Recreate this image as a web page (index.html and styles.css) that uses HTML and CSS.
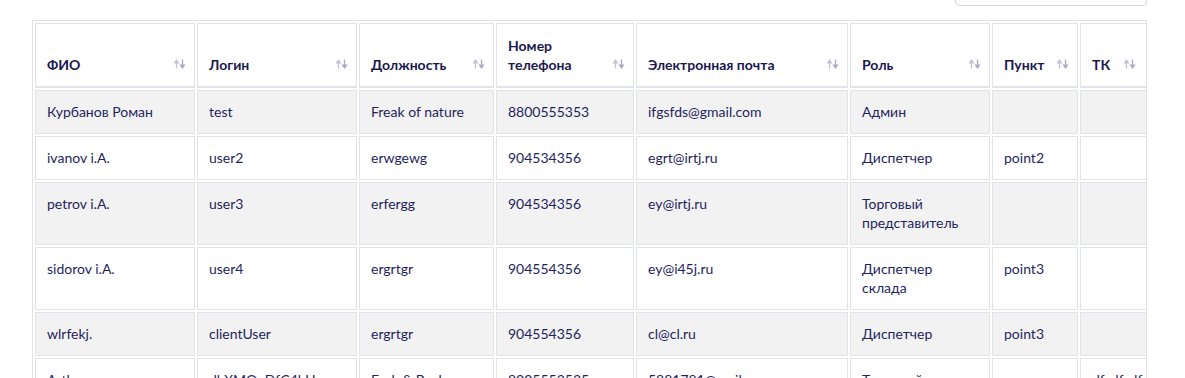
FILE: index.html
```html
<!DOCTYPE html>
<html lang="ru">
<head>
<meta charset="utf-8">
<title>Пользователи</title>
<link rel="stylesheet" href="styles.css">
</head>
<body>
<div class="page">
  <div class="toolbar">
    <input class="search" type="text" placeholder="Поиск">
  </div>
  <div class="table-wrap">
    <table class="users">
      <colgroup>
        <col class="w1"><col class="w2"><col class="w3"><col class="w4"><col class="w5"><col class="w6"><col class="w7"><col class="w8">
      </colgroup>
      <thead>
        <tr>
          <th><div class="th-in"><span>ФИО</span><svg class="sort" viewBox="0 0 12 10"><path d="M2.5 9.5V2.5M0.6 3.9L2.5 1.2L4.4 3.9Z"/><path class="dn" d="M8.5 0.5V7.5M6.6 6.1L8.5 8.8L10.4 6.1Z"/></svg></div></th>
          <th><div class="th-in"><span>Логин</span><svg class="sort" viewBox="0 0 12 10"><path d="M2.5 9.5V2.5M0.6 3.9L2.5 1.2L4.4 3.9Z"/><path class="dn" d="M8.5 0.5V7.5M6.6 6.1L8.5 8.8L10.4 6.1Z"/></svg></div></th>
          <th><div class="th-in"><span>Должность</span><svg class="sort" viewBox="0 0 12 10"><path d="M2.5 9.5V2.5M0.6 3.9L2.5 1.2L4.4 3.9Z"/><path class="dn" d="M8.5 0.5V7.5M6.6 6.1L8.5 8.8L10.4 6.1Z"/></svg></div></th>
          <th><div class="th-in"><span>Номер<br>телефона</span><svg class="sort" viewBox="0 0 12 10"><path d="M2.5 9.5V2.5M0.6 3.9L2.5 1.2L4.4 3.9Z"/><path class="dn" d="M8.5 0.5V7.5M6.6 6.1L8.5 8.8L10.4 6.1Z"/></svg></div></th>
          <th><div class="th-in"><span>Электронная почта</span><svg class="sort" viewBox="0 0 12 10"><path d="M2.5 9.5V2.5M0.6 3.9L2.5 1.2L4.4 3.9Z"/><path class="dn" d="M8.5 0.5V7.5M6.6 6.1L8.5 8.8L10.4 6.1Z"/></svg></div></th>
          <th><div class="th-in"><span>Роль</span><svg class="sort" viewBox="0 0 12 10"><path d="M2.5 9.5V2.5M0.6 3.9L2.5 1.2L4.4 3.9Z"/><path class="dn" d="M8.5 0.5V7.5M6.6 6.1L8.5 8.8L10.4 6.1Z"/></svg></div></th>
          <th><div class="th-in"><span>Пункт</span><svg class="sort" viewBox="0 0 12 10"><path d="M2.5 9.5V2.5M0.6 3.9L2.5 1.2L4.4 3.9Z"/><path class="dn" d="M8.5 0.5V7.5M6.6 6.1L8.5 8.8L10.4 6.1Z"/></svg></div></th>
          <th><div class="th-in th-left"><span>ТК</span><svg class="sort" viewBox="0 0 12 10"><path d="M2.5 9.5V2.5M0.6 3.9L2.5 1.2L4.4 3.9Z"/><path class="dn" d="M8.5 0.5V7.5M6.6 6.1L8.5 8.8L10.4 6.1Z"/></svg></div></th>
        </tr>
      </thead>
      <tbody>
        <tr class="odd">
          <td>Курбанов Роман</td><td>test</td><td>Freak of nature</td><td>8800555353</td><td>ifgsfds@gmail.com</td><td>Админ</td><td></td><td></td>
        </tr>
        <tr>
          <td>ivanov i.A.</td><td>user2</td><td>erwgewg</td><td>904534356</td><td>egrt@irtj.ru</td><td>Диспетчер</td><td>point2</td><td></td>
        </tr>
        <tr class="odd">
          <td>petrov i.A.</td><td>user3</td><td>erfergg</td><td>904534356</td><td>ey@irtj.ru</td><td>Торговый представитель</td><td></td><td></td>
        </tr>
        <tr>
          <td>sidorov i.A.</td><td>user4</td><td>ergrtgr</td><td>904554356</td><td>ey@i45j.ru</td><td>Диспетчер склада</td><td>point3</td><td></td>
        </tr>
        <tr class="odd">
          <td>wlrfekj.</td><td>clientUser</td><td>ergrtgr</td><td>904554356</td><td>cl@cl.ru</td><td>Диспетчер</td><td>point3</td><td></td>
        </tr>
        <tr>
          <td>Arthur</td><td>dkXMQnDfC4bUe</td><td>Fack &amp; Back</td><td>8005553535</td><td>5881781@mail.ru</td><td>Торговый представитель</td><td></td><td>dfsdfsdf</td>
        </tr>
      </tbody>
    </table>
  </div>
</div>
</body>
</html>
```
FILE: styles.css
```css
html, body {
  margin: 0;
  padding: 0;
  background: #ffffff;
}

body {
  font-family: "Lato", "Noto Sans", sans-serif;
  font-size: 14px;
  color: #241f5e;
}

.page {
  padding: 0 38px 0 32px;
}

.toolbar {
  display: flex;
  justify-content: flex-end;
  align-items: flex-end;
  height: 6px;
  overflow: hidden;
  margin-bottom: 14px;
}

.search {
  flex: 0 0 auto;
  width: 192px;
  height: 36px;
  box-sizing: border-box;
  border: 1px solid #d6d8df;
  border-radius: 4px;
  background: #fff;
  font: inherit;
}

.table-wrap {
  border: 1px solid #dfe1e6;
  overflow: hidden;
  height: 400px;
}

.users {
  table-layout: fixed;
  width: 1189px;
  border-collapse: separate;
  border-spacing: 2px;
}

.w1 { width: 160px; }
.w2 { width: 160px; }
.w3 { width: 135px; }
.w4 { width: 138px; }
.w5 { width: 212px; }
.w6 { width: 140px; }
.w7 { width: 86px; }
.w8 { width: 140px; }

.users th,
.users td {
  border: 1px solid #e1e3e8;
  text-align: left;
  line-height: 19px;
  box-sizing: border-box;
}

.users th {
  padding: 12px 8px 12px 11px;
  border-bottom-width: 2px;
  vertical-align: bottom;
  font-weight: 700;
  color: #1b1850;
  background: #fff;
}

.th-in {
  display: flex;
  justify-content: space-between;
  align-items: flex-end;
  gap: 6px;
}

.th-left {
  justify-content: flex-start;
  gap: 14px;
}

.sort {
  flex: 0 0 auto;
  width: 12px;
  height: 10px;
  margin-bottom: 5px;
}

.sort path {
  fill: #c3c4d3;
  stroke: #c3c4d3;
  stroke-width: 1.3;
}

.sort path.dn {
  fill: #a9abc0;
  stroke: #a9abc0;
}

.users td {
  padding: 11px 11px 12px;
  vertical-align: top;
  background: #fff;
}

.users tr.odd td {
  background: #f2f2f2;
}
```
